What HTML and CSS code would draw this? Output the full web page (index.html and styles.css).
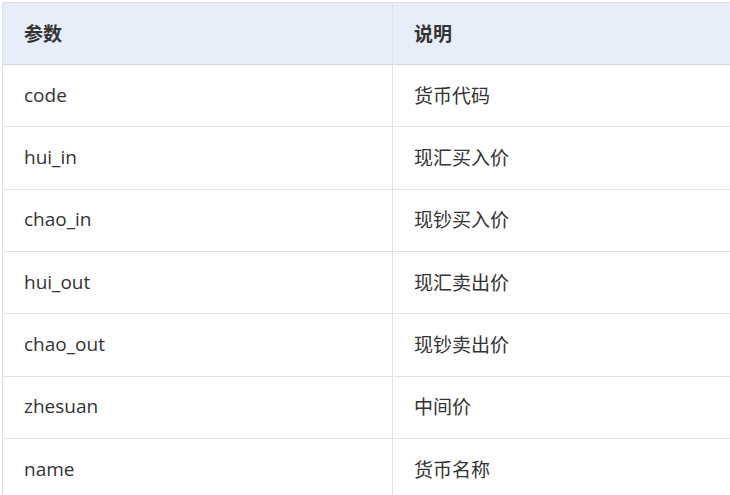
FILE: index.html
```html
<!DOCTYPE html>
<html lang="zh">
<head>
<meta charset="utf-8">
<link rel="stylesheet" href="styles.css">
</head>
<body>
<table class="params">
  <thead>
    <tr><th class="col-a">参数</th><th>说明</th></tr>
  </thead>
  <tbody>
    <tr><td>code</td><td>货币代码</td></tr>
    <tr><td>hui_in</td><td>现汇买入价</td></tr>
    <tr><td>chao_in</td><td>现钞买入价</td></tr>
    <tr><td>hui_out</td><td>现汇卖出价</td></tr>
    <tr><td>chao_out</td><td>现钞卖出价</td></tr>
    <tr><td>zhesuan</td><td>中间价</td></tr>
    <tr><td>name</td><td>货币名称</td></tr>
  </tbody>
</table>
</body>
</html>
```
FILE: styles.css
```css
html, body {
  margin: 0;
  padding: 0;
  background: #ffffff;
  overflow: hidden;
}
body {
  padding: 2px 0 0 2px;
  font-family: "Open Sans", "Noto Sans CJK SC", sans-serif;
  font-size: 19px;
  color: #333333;
}
.params {
  border-collapse: collapse;
  width: 729px;
  table-layout: fixed;
}
.params th, .params td {
  border: 1px solid #dfe3e8;
  text-align: left;
  padding: 0 0 2px 21px;
  height: 62.33px;
  box-sizing: border-box;
}
.params th {
  background: #e7eef9;
  font-weight: 700;
  font-size: 19px;
  color: #333333;
  height: 62px;
  border-bottom-color: #d3d9e3;
}
.params .col-a {
  width: 390px;
}
.params td {
  font-weight: 400;
}
```
